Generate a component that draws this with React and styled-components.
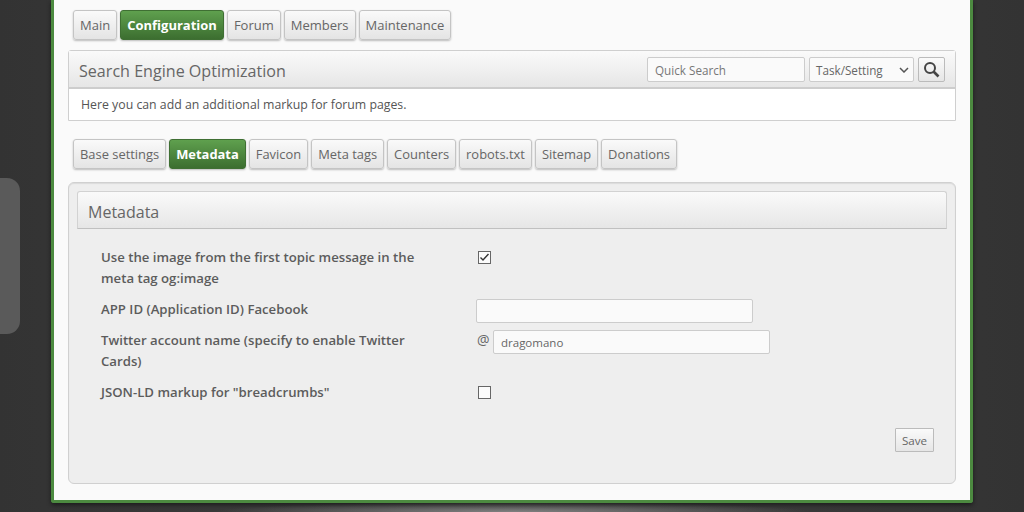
import React from "react";
import styled, { createGlobalStyle } from "styled-components";

const Global = createGlobalStyle`
  html, body { margin: 0; padding: 0; height: 512px; overflow: hidden; background: #383838; }
  body { font-family: "Open Sans", "Liberation Sans", sans-serif; font-size: 13px; color: #555; }
  * { box-sizing: border-box; }
`;

const Page = styled.div`
  position: relative;
  height: 512px;
  overflow: hidden;
  background:
    radial-gradient(ellipse 300px 10px at 512px 512px, #808080 0%, rgba(128,128,128,0) 100%),
    linear-gradient(90deg, #333 0%, #3f3f3f 50%, #333 100%);
`;

const SideHandle = styled.div`
  position: absolute;
  left: 0;
  top: 178px;
  width: 20px;
  height: 156px;
  background: #5a5a5a;
  border-radius: 0 13px 13px 0;
`;

const Card = styled.div`
  width: 922px;
  height: 503px;
  margin-left: 51px;
  padding: 10px 14px 0;
  background: #fafafa;
  border: 3px solid #4c8a40;
  border-top: 0;
  border-radius: 0 0 3px 3px;
  box-shadow: 0 2px 4px rgba(0, 0, 0, 0.5);
`;

const Tabs = styled.div`
  display: flex;
  gap: 3px;
  padding-left: 5px;
  font-size: ${(p) => p.$size}px;
  margin-bottom: ${(p) => p.$mb}px;
`;

const Tab = styled.div`
  height: 30px;
  line-height: 28px;
  padding: 0 6px;
  white-space: nowrap;
  border-radius: 3px;
  border: 1px solid ${(p) => (p.$active ? "#3f6f33" : "#c4c4c4")};
  color: ${(p) => (p.$active ? "#fff" : "#666")};
  font-weight: ${(p) => (p.$active ? 700 : 400)};
  background: ${(p) =>
    p.$active
      ? "linear-gradient(#5fa04e, #3c6e30)"
      : "linear-gradient(#fafafa, #e4e4e4)"};
  box-shadow: 0 1px 2px rgba(0, 0, 0, 0.25);
`;

const Panel = styled.div`
  border: 1px solid #cfcfcf;
  border-radius: 3px 3px 0 0;
  margin-bottom: 18px;
  height: 71px;
  background: #fff;
`;

const PanelHead = styled.div`
  height: 38px;
  display: flex;
  align-items: center;
  padding: 0 10px;
  background: linear-gradient(#fafafa, #e6e6e6);
  border-bottom: 2px solid #cdcdcd;
`;

const Title = styled.div`
  font-size: 16.1px;
  line-height: 24px;
  padding-top: 3px;
  color: #666;
  flex: 1;
`;

const SearchInput = styled.div`
  width: 158px;
  height: 25px;
  line-height: 25px;
  padding-left: 7px;
  border: 1px solid #ccc;
  border-radius: 2px;
  background: #fafafa;
  font-size: 11.7px;
  color: #777;
`;

const Select = styled.div`
  width: 105px;
  height: 25px;
  margin-left: 4px;
  padding: 1px 4px 0 6px;
  display: flex;
  align-items: center;
  justify-content: space-between;
  border: 1px solid #ccc;
  border-radius: 2px;
  background: #fafafa;
  font-size: 11.7px;
  color: #666;
`;

const IconButton = styled.div`
  width: 27px;
  height: 25px;
  margin-left: 4px;
  display: flex;
  align-items: center;
  justify-content: center;
  border: 1px solid #bbb;
  border-radius: 2px;
  background: linear-gradient(#fafafa, #e6e6e6);
`;

const PanelText = styled.div`
  padding: 7px 12px;
  font-size: 12.3px;
  line-height: 18px;
  color: #555;
`;

const FormPanel = styled.div`
  height: 302px;
  padding: 8px 8px 0;
  background: #eee;
  border: 1px solid #d0d0d0;
  border-radius: 6px;
  box-shadow: inset 0 1px 1px rgba(0,0,0,.08);
`;

const FormHead = styled.div`
  height: 38px;
  line-height: 40px;
  padding-left: 10px;
  font-size: 16px;
  color: #666;
  border: 1px solid #d2d2d2;
  border-bottom: 1px solid #c0c0c0;
  border-radius: 3px 3px 0 0;
  background: linear-gradient(#fafafa, #e6e6e6);
`;

const Form = styled.div`
  padding: 18px 0 0 24px;
  display: flex;
  flex-direction: column;
`;

const Row = styled.div`
  display: grid;
  grid-template-columns: 375px 1fr;
  min-height: ${(p) => p.$h}px;
`;

const Label = styled.div`
  width: 330px;
  font-size: 13.2px;
  font-weight: 600;
  line-height: 21px;
  color: #5c5c5c;
`;

const Field = styled.div`
  display: flex;
  align-items: flex-start;
`;

const Check = styled.div`
  width: 13px;
  height: 13px;
  margin: 4px 0 0 2px;
  border: 1px solid #666;
  background: #fbfbfb;
  display: flex;
  align-items: center;
  justify-content: center;
`;

const TextInput = styled.div`
  width: ${(p) => p.$w}px;
  height: 24px;
  line-height: 24px;
  padding-left: 7px;
  border: 1px solid #ccc;
  border-radius: 2px;
  background: #fafafa;
  font-size: 11.5px;
  color: #666;
`;

const At = styled.span`
  width: 17px;
  padding-left: 1px;
  font-size: 14px;
  line-height: 20px;
  color: #666;
`;

const Actions = styled.div`
  display: flex;
  justify-content: flex-end;
  padding-right: 13px;
  margin-top: 15px;
`;

const SaveButton = styled.div`
  height: 24px;
  line-height: 23px;
  padding: 0 6px;
  font-size: 11.6px;
  color: #666;
  border: 1px solid #bbb;
  border-radius: 1px;
  background: linear-gradient(#fafafa, #e6e6e6);
`;

export default function App() {
  return (
    <Page>
      <Global />
      <SideHandle />
      <Card>
        <Tabs $mb={10} $size={13}>
          <Tab>Main</Tab>
          <Tab $active>Configuration</Tab>
          <Tab>Forum</Tab>
          <Tab>Members</Tab>
          <Tab>Maintenance</Tab>
        </Tabs>
        <Panel>
          <PanelHead>
            <Title>Search Engine Optimization</Title>
            <SearchInput>Quick Search</SearchInput>
            <Select>
              Task/Setting
              <svg width="10" height="6" viewBox="0 0 10 6" fill="none" stroke="#555" strokeWidth="1.5">
                <path d="M1 1l4 4 4-4" />
              </svg>
            </Select>
            <IconButton>
              <svg width="17" height="17" viewBox="0 0 17 17" fill="none" stroke="#444" strokeWidth="2">
                <circle cx="7" cy="7" r="5" />
                <path d="M10.5 10.5L15.5 15.5" strokeWidth="2.6" />
              </svg>
            </IconButton>
          </PanelHead>
          <PanelText>Here you can add an additional markup for forum pages.</PanelText>
        </Panel>
        <Tabs $mb={13} $size={12.92}>
          <Tab>Base settings</Tab>
          <Tab $active>Metadata</Tab>
          <Tab>Favicon</Tab>
          <Tab>Meta tags</Tab>
          <Tab>Counters</Tab>
          <Tab>robots.txt</Tab>
          <Tab>Sitemap</Tab>
          <Tab>Donations</Tab>
        </Tabs>
        <FormPanel>
          <FormHead>Metadata</FormHead>
          <Form>
            <Row $h={52}>
              <Label>Use the image from the first topic message in the meta tag og:image</Label>
              <Field>
                <Check>
                  <svg width="11" height="11" viewBox="0 0 11 11" fill="none" stroke="#333" strokeWidth="1.4">
                    <path d="M1.5 5.5l2.5 2.5 5.5-6" />
                  </svg>
                </Check>
              </Field>
            </Row>
            <Row $h={31}>
              <Label>APP ID (Application ID) Facebook</Label>
              <Field><TextInput $w={277} /></Field>
            </Row>
            <Row $h={52}>
              <Label>Twitter account name (specify to enable Twitter Cards)</Label>
              <Field><At>@</At><TextInput $w={277}>dragomano</TextInput></Field>
            </Row>
            <Row $h={31}>
              <Label>JSON-LD markup for "breadcrumbs"</Label>
              <Field><Check /></Field>
            </Row>
            <Actions><SaveButton>Save</SaveButton></Actions>
          </Form>
        </FormPanel>
      </Card>
    </Page>
  );
}
